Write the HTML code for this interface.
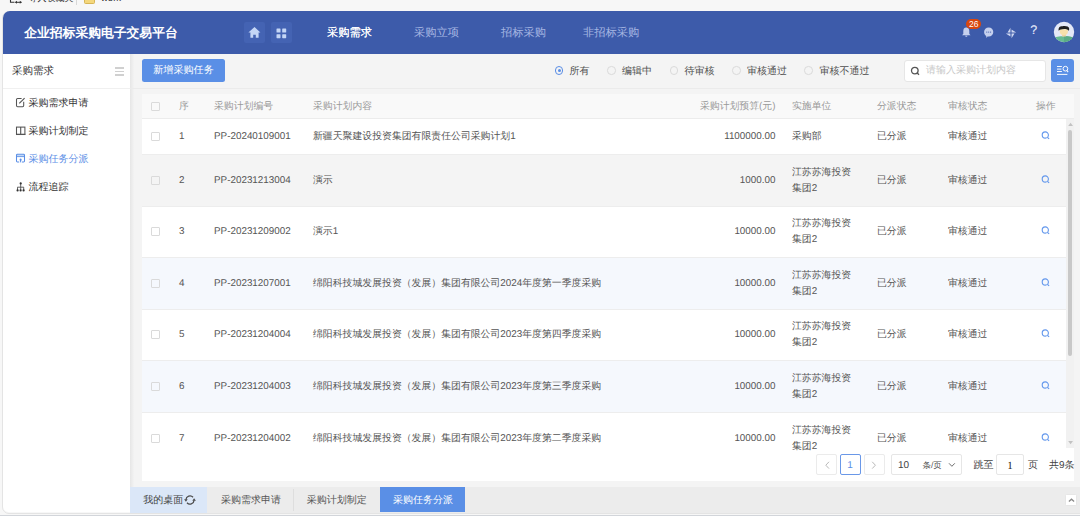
<!DOCTYPE html>
<html><head><meta charset="utf-8">
<style>
*{box-sizing:border-box;margin:0;padding:0}
html,body{width:1080px;height:516px;overflow:hidden;background:#f7f7f7;font-family:"Liberation Sans",sans-serif;text-rendering:geometricPrecision}
.a{position:absolute;white-space:nowrap}
#hdr{position:absolute;left:3px;top:11px;width:1077px;height:42.6px;background:#3d5baa;border-top-left-radius:7px}
#side{position:absolute;left:3px;top:53.6px;width:127px;height:458.9px;background:#fff;border-bottom-left-radius:6px}
#main{position:absolute;left:130px;top:53.6px;width:950px;height:458.9px;background:#f4f4f4}
#bottomline{position:absolute;left:0;top:515px;width:1080px;height:1px;background:#d2d5da}
#frame{position:absolute;left:2px;top:10.5px;width:1090px;height:503px;border:1px solid #e4e4e4;border-radius:7px}
</style></head><body>

<!-- bookmark bar remnants -->
<div class="a" style="left:28.5px;top:-7.2px;font-size:9px;line-height:10px;color:#333">导入收藏夹</div>
<div class="a" style="left:101px;top:-5.6px;font-size:9.5px;line-height:10px;color:#333">work</div>
<svg class="a" style="left:9px;top:-6px" width="14" height="10" viewBox="0 0 14 10"><path d="M1.5 0 L1.5 8.3 L5.5 8.3" fill="none" stroke="#333" stroke-width="1.1"/><path d="M6.3 8.3 L12.5 8.3" stroke="#333" stroke-width="1"/><path d="M6 8.3 L8 6.8 L8 9.8Z M12.8 8.3 L10.8 6.8 L10.8 9.8Z" fill="#333"/></svg>
<div class="a" style="left:76px;top:0;width:1px;height:4.5px;background:#d8d8d8"></div>
<div class="a" style="left:84.3px;top:-5px;width:10.3px;height:8.5px;background:#f4d77c;border:1px solid #d7b556;border-radius:1.5px"></div>
<div id="frame"></div>
<div id="hdr"></div>
<div class="a" style="left:24.2px;top:25.2px;font-size:12.8px;line-height:16px;color:#fff;font-weight:bold">企业招标采购电子交易平台</div>

<div id="side"></div>
<div id="main"></div>

<!-- header nav buttons -->
<div class="a" style="left:244px;top:22px;width:21px;height:21px;background:#4463b3;border-radius:2px"></div>
<div class="a" style="left:271px;top:22px;width:21px;height:21px;background:#4463b3;border-radius:2px"></div>
<svg class="a" style="left:248px;top:26px" width="13" height="13" viewBox="0 0 13 13"><path d="M6.5 0.9 L12.4 6.5 L10.6 6.5 L10.6 11.8 L7.8 11.8 L7.8 8.7 L5.2 8.7 L5.2 11.8 L2.4 11.8 L2.4 6.5 L0.4 6.5 Z" fill="#c4d6f6"/></svg>
<svg class="a" style="left:276px;top:27.5px" width="11" height="11" viewBox="0 0 11 11"><rect x="0.5" y="0.5" width="4" height="4" rx="0.6" fill="#c4d6f6"/><rect x="6.2" y="0.5" width="4" height="4" rx="0.6" fill="#c4d6f6"/><rect x="0.5" y="6.2" width="4" height="4" rx="0.6" fill="#c4d6f6"/><rect x="6.2" y="6.2" width="4" height="4" rx="0.6" fill="#c4d6f6"/></svg>
<div class="a" style="left:327px;top:26px;font-size:11.25px;line-height:14px;color:#fff;text-shadow:0 0 0.4px #fff">采购需求</div>
<div class="a" style="left:414px;top:26px;font-size:11.25px;line-height:14px;color:#a6b6e2">采购立项</div>
<div class="a" style="left:501px;top:26px;font-size:11.25px;line-height:14px;color:#a6b6e2">招标采购</div>
<div class="a" style="left:583px;top:26px;font-size:11.25px;line-height:14px;color:#a6b6e2">非招标采购</div>

<!-- right icons -->
<svg class="a" style="left:961px;top:26px" width="12" height="12" viewBox="0 0 12 12"><path d="M5.3 1.6 C3.1 1.6 2.3 3.3 2.3 5.3 L2.3 7.8 L1.1 9.2 L9.5 9.2 L8.3 7.8 L8.3 5.3 C8.3 3.3 7.5 1.6 5.3 1.6Z M4.2 9.7 L6.4 9.7 C6.4 10.4 5.9 10.7 5.3 10.7 C4.7 10.7 4.2 10.4 4.2 9.7Z" fill="#c5d0ee"/></svg>
<div class="a" style="left:966px;top:19.3px;width:15.3px;height:9.6px;background:#d9470f;border-radius:5px;color:#fff;font-size:8.5px;line-height:11px;text-align:center">26</div>
<svg class="a" style="left:983px;top:27px" width="12" height="12" viewBox="0 0 12 12"><path d="M5.7 0.6 C8.3 0.6 10.3 2.6 10.3 5.1 C10.3 7.6 8.3 9.6 5.7 9.6 C5.3 9.6 4.9 9.55 4.5 9.45 L3.5 10.9 L3.2 9 C1.9 8.2 1.1 6.8 1.1 5.1 C1.1 2.6 3.1 0.6 5.7 0.6Z" fill="#c5d0ee"/><circle cx="3.8" cy="5.1" r="0.6" fill="#4862ad"/><circle cx="5.7" cy="5.1" r="0.6" fill="#4862ad"/><circle cx="7.6" cy="5.1" r="0.6" fill="#4862ad"/></svg>
<svg class="a" style="left:1004.4px;top:25.7px" width="14" height="14" viewBox="0 0 14 14"><path d="M6.45 6.45 L6.45 1.80 L3.50 6.45Z M7.55 6.45 L12.20 6.45 L7.55 3.50Z M7.55 7.55 L7.55 12.20 L10.50 7.55Z M6.45 7.55 L1.80 7.55 L6.45 10.50Z" fill="#cdd6f0"/></svg>
<div class="a" style="left:1030.3px;top:23px;font-size:12.5px;line-height:14px;color:#d2d9f0;text-shadow:0 0 0.5px #d2d9f0">?</div>
<svg class="a" style="left:1053px;top:21.4px" width="22" height="22" viewBox="0 0 22 22"><defs><clipPath id="cc"><circle cx="11" cy="11" r="10.2"/></clipPath></defs><circle cx="11" cy="11" r="10.2" fill="#e4e9f7"/><g clip-path="url(#cc)"><path d="M0 22 L0 17.2 C2.5 15.6 6 15.2 11 15.2 C16 15.2 19.5 15.6 22 17.2 L22 22Z" fill="#68bb93"/><path d="M11 15.2 C16 15.2 19.5 15.6 22 17.2 L22 22 L11 22Z" fill="#5aab86"/><rect x="9.2" y="12.6" width="3.6" height="2.9" fill="#ecd09c"/><path d="M6.7 8.3 L15 8.3 L14.8 11.3 C14.5 13.6 13 14.3 10.9 14.3 C8.8 14.3 7.2 13.6 6.9 11.3Z" fill="#f6e0ab"/><path d="M5.7 9.8 C5.1 6.6 6.9 5.2 9.4 5.3 C11 4.7 13 4.8 14.6 5.5 C16.3 6.3 16.5 8 15.9 9.8 C15.1 8.7 14.3 8.3 13.4 8.2 C11 8.0 8.6 8.2 6.9 8.7 C6.4 9 6 9.3 5.7 9.8Z" fill="#1f1f1f"/></g></svg>

<!-- sidebar -->
<div class="a" style="left:12px;top:64.5px;font-size:10.5px;line-height:13px;color:#333">采购需求</div>
<div class="a" style="left:115px;top:67px;width:9px;height:1.6px;background:#d0d0d0"></div>
<div class="a" style="left:115px;top:70.6px;width:9px;height:1.6px;background:#d0d0d0"></div>
<div class="a" style="left:115px;top:74.2px;width:9px;height:1.6px;background:#d0d0d0"></div>
<div class="a" style="left:3px;top:88px;width:127px;height:1px;background:#f0f0f0"></div>
<svg class="a" style="left:12px;top:94px" width="18" height="16" viewBox="0 0 18 16"><path d="M9.6 4.5 L5.6 4.5 Q4.5 4.5 4.5 5.6 L4.5 11.6 Q4.5 12.7 5.6 12.7 L10.6 12.7 Q11.7 12.7 11.7 11.6 L11.7 7.8" fill="none" stroke="#555" stroke-width="1.05"/><path d="M7.3 9.4 L12.6 4.1" stroke="#555" stroke-width="1.15"/></svg>
<div class="a" style="left:28.5px;top:96.7px;font-size:10px;line-height:13px;color:#333">采购需求申请</div>
<svg class="a" style="left:12px;top:122px" width="18" height="16" viewBox="0 0 18 16"><rect x="4.5" y="5.1" width="8.4" height="7.4" fill="none" stroke="#555" stroke-width="1.05"/><path d="M8.7 5.1 L8.7 12.5 M4 12.3 L13.4 12.3" stroke="#555" stroke-width="1.1"/></svg>
<div class="a" style="left:28.5px;top:125.2px;font-size:10px;line-height:13px;color:#333">采购计划制定</div>
<svg class="a" style="left:12px;top:150px" width="18" height="16" viewBox="0 0 18 16"><path d="M7.2 11.9 L5.4 11.9 Q4.5 11.9 4.5 11 L4.5 5.2 Q4.5 4.3 5.4 4.3 L11.6 4.3 Q12.5 4.3 12.5 5.2 L12.5 11 Q12.5 11.9 11.6 11.9 L9.8 11.9" fill="none" stroke="#5a8ee6" stroke-width="1.05"/><path d="M4.5 6.6 L12.5 6.6" stroke="#5a8ee6" stroke-width="0.9"/><rect x="5" y="4.8" width="7" height="1.4" fill="#5a8ee6" opacity="0.35"/><path d="M8.6 8.6 C9.6 8.6 9.9 9.6 9.4 10.5 L8.3 13 L7.9 10.5 C7.4 9.6 7.6 8.6 8.6 8.6Z" fill="#5a8ee6"/></svg>
<div class="a" style="left:28.5px;top:153.2px;font-size:10px;line-height:13px;color:#5a8ee6">采购任务分派</div>
<svg class="a" style="left:12px;top:178px" width="18" height="16" viewBox="0 0 18 16"><path d="M8.7 5.3 L8.7 12.3 M5.4 9.2 L11.8 9.2 M5.5 9.2 L5.5 12.3 M11.7 9.2 L11.7 12.3" fill="none" stroke="#555" stroke-width="0.9"/><circle cx="8.7" cy="5.4" r="1.1" fill="#333"/><circle cx="5.6" cy="12.4" r="1.1" fill="#333"/><circle cx="8.6" cy="12.4" r="1.1" fill="#333"/><circle cx="11.6" cy="12.4" r="1.1" fill="#333"/></svg>
<div class="a" style="left:28.5px;top:181.2px;font-size:10px;line-height:13px;color:#333">流程追踪</div>

<!-- toolbar -->
<div class="a" style="left:130px;top:53.6px;width:4px;height:433.4px;background:linear-gradient(to right,#e6e6e6,#f3f3f3)"></div>
<div class="a" style="left:130px;top:87.5px;width:950px;height:1px;background:#ebebeb"></div>
<div class="a" style="left:142px;top:59.2px;width:83px;height:22.6px;background:#5a8fe6;border-radius:2.5px;color:#fff;font-size:10.1px;line-height:24px;text-align:center">新增采购任务</div>

<!-- radios -->
<div class="a" style="left:554.7px;top:66px;width:8.6px;height:8.6px;border:1px solid #5a8ee6;border-radius:50%"></div>
<div class="a" style="left:557.5px;top:68.8px;width:3px;height:3px;background:#5a8ee6;border-radius:50%"></div>
<div class="a" style="left:569.5px;top:64.7px;font-size:10px;line-height:13px;color:#505050">所有</div>
<div class="a" style="left:607px;top:66px;width:8.6px;height:8.6px;border:1px solid #dadada;border-radius:50%"></div>
<div class="a" style="left:622px;top:64.7px;font-size:10px;line-height:13px;color:#505050">编辑中</div>
<div class="a" style="left:669.7px;top:66px;width:8.6px;height:8.6px;border:1px solid #dadada;border-radius:50%"></div>
<div class="a" style="left:684.5px;top:64.7px;font-size:10px;line-height:13px;color:#505050">待审核</div>
<div class="a" style="left:732px;top:66px;width:8.6px;height:8.6px;border:1px solid #dadada;border-radius:50%"></div>
<div class="a" style="left:747px;top:64.7px;font-size:10px;line-height:13px;color:#505050">审核通过</div>
<div class="a" style="left:804.2px;top:66px;width:8.6px;height:8.6px;border:1px solid #dadada;border-radius:50%"></div>
<div class="a" style="left:819.5px;top:64.7px;font-size:10px;line-height:13px;color:#505050">审核不通过</div>

<!-- search -->
<div class="a" style="left:904px;top:59.5px;width:141.5px;height:22px;background:#fff;border:1px solid #e6e6e6;border-radius:3px"></div>
<svg class="a" style="left:910px;top:66px" width="11" height="10" viewBox="0 0 11 10"><circle cx="4.8" cy="4.6" r="3.3" fill="none" stroke="#555" stroke-width="1.3"/><path d="M7.2 7 L9 8.8" stroke="#555" stroke-width="1.3"/></svg>
<div class="a" style="left:926px;top:64px;font-size:10px;line-height:13px;color:#c8c8c8">请输入采购计划内容</div>
<div class="a" style="left:1051px;top:59.2px;width:23px;height:22.8px;background:#5a8fe6;border-radius:3px"></div>
<svg class="a" style="left:1051px;top:57px" width="23" height="28" viewBox="0 0 23 28"><path d="M6 9.5 L10.9 9.5 M6 12.1 L10.4 12.1 M6 14.5 L10.9 14.5 M6 17.4 L16.4 17.4" stroke="#fff" stroke-width="0.95"/><circle cx="14.4" cy="11.7" r="2.35" fill="none" stroke="#fff" stroke-width="1"/><path d="M16 13.5 L17.1 15.1" stroke="#fff" stroke-width="1.1"/></svg>

<!-- table -->
<div class="a" style="left:142px;top:94px;width:932px;height:387px;background:#fff"></div>
<div class="a" style="left:142px;top:94px;width:932px;height:24.5px;background:#f9f9f9;border-bottom:1px solid #ececec"></div>
<div class="a" style="left:142px;top:154.5px;width:924.2px;height:51.5px;background:#f4f4f4"></div>
<div class="a" style="left:142px;top:257px;width:924.2px;height:52px;background:#f5f8fd"></div>
<div class="a" style="left:142px;top:360px;width:924.2px;height:52px;background:#f5f8fd"></div>
<div class="a" style="left:142px;top:153.5px;width:924.2px;height:1px;background:#ededed"></div><div class="a" style="left:142px;top:205.5px;width:924.2px;height:1px;background:#ededed"></div><div class="a" style="left:142px;top:256.5px;width:924.2px;height:1px;background:#ededed"></div><div class="a" style="left:142px;top:308.5px;width:924.2px;height:1px;background:#ededed"></div><div class="a" style="left:142px;top:359.5px;width:924.2px;height:1px;background:#ededed"></div><div class="a" style="left:142px;top:411.5px;width:924.2px;height:1px;background:#ededed"></div>
<div class="a" style="left:0;top:0;width:1080px;height:451px;overflow:hidden"><div class="a" style="left:151px;top:101.8px;width:9px;height:9.4px;border:1px solid #dadada;border-radius:1px"></div>
<div class="a" style="left:179px;top:99.8px;font-size:9.87px;line-height:13px;color:#999">序</div>
<div class="a" style="left:214px;top:99.8px;font-size:9.87px;line-height:13px;color:#999">采购计划编号</div>
<div class="a" style="left:313px;top:99.8px;font-size:9.87px;line-height:13px;color:#999">采购计划内容</div>
<div class="a" style="left:877px;top:99.8px;font-size:9.87px;line-height:13px;color:#999">分派状态</div>
<div class="a" style="left:948px;top:99.8px;font-size:9.87px;line-height:13px;color:#999">审核状态</div>
<div class="a" style="left:1036px;top:99.8px;font-size:9.87px;line-height:13px;color:#999">操作</div>
<div class="a" style="left:792px;top:99.8px;font-size:9.87px;line-height:13px;color:#999">实施单位</div>
<div class="a" style="left:675px;width:100.5px;text-align:right;top:99.8px;font-size:9.87px;line-height:13px;color:#999">采购计划预算(元)</div>
<div class="a" style="left:151px;top:131.75px;width:9px;height:9.4px;border:1px solid #dadada;border-radius:1px"></div>
<div class="a" style="left:179px;top:129.75px;font-size:9.87px;line-height:13px;color:#555">1</div>
<div class="a" style="left:214px;top:129.75px;font-size:9.87px;line-height:13px;color:#555">PP-20240109001</div>
<div class="a" style="left:313px;top:129.75px;font-size:9.87px;line-height:13px;color:#555">新疆天聚建设投资集团有限责任公司采购计划1</div>
<div class="a" style="left:675px;width:100.5px;text-align:right;top:129.75px;font-size:9.87px;line-height:13px;color:#555">1100000.00</div>
<div class="a" style="left:792px;top:129.75px;font-size:9.87px;line-height:13px;color:#555">采购部</div>
<div class="a" style="left:877px;top:129.75px;font-size:9.87px;line-height:13px;color:#555">已分派</div>
<div class="a" style="left:948px;top:129.75px;font-size:9.87px;line-height:13px;color:#555">审核通过</div>
<svg class="a" style="left:1040.5px;top:130.95px" width="10" height="9" viewBox="0 0 10 9"><circle cx="4.3" cy="4" r="3.1" fill="none" stroke="#6297ec" stroke-width="1.1"/><path d="M6.5 6.3 L8.1 7.9" stroke="#6297ec" stroke-width="1.2"/></svg>
<div class="a" style="left:151px;top:175.5px;width:9px;height:9.4px;border:1px solid #dadada;border-radius:1px"></div>
<div class="a" style="left:179px;top:173.5px;font-size:9.87px;line-height:13px;color:#555">2</div>
<div class="a" style="left:214px;top:173.5px;font-size:9.87px;line-height:13px;color:#555">PP-20231213004</div>
<div class="a" style="left:313px;top:173.5px;font-size:9.87px;line-height:13px;color:#555">演示</div>
<div class="a" style="left:675px;width:100.5px;text-align:right;top:173.5px;font-size:9.87px;line-height:13px;color:#555">1000.00</div>
<div class="a" style="left:792px;top:164.80px;font-size:9.87px;line-height:16px;color:#555">江苏苏海投资<br>集团2</div>
<div class="a" style="left:877px;top:173.5px;font-size:9.87px;line-height:13px;color:#555">已分派</div>
<div class="a" style="left:948px;top:173.5px;font-size:9.87px;line-height:13px;color:#555">审核通过</div>
<svg class="a" style="left:1040.5px;top:174.70px" width="10" height="9" viewBox="0 0 10 9"><circle cx="4.3" cy="4" r="3.1" fill="none" stroke="#6297ec" stroke-width="1.1"/><path d="M6.5 6.3 L8.1 7.9" stroke="#6297ec" stroke-width="1.2"/></svg>
<div class="a" style="left:151px;top:227.0px;width:9px;height:9.4px;border:1px solid #dadada;border-radius:1px"></div>
<div class="a" style="left:179px;top:225.0px;font-size:9.87px;line-height:13px;color:#555">3</div>
<div class="a" style="left:214px;top:225.0px;font-size:9.87px;line-height:13px;color:#555">PP-20231209002</div>
<div class="a" style="left:313px;top:225.0px;font-size:9.87px;line-height:13px;color:#555">演示1</div>
<div class="a" style="left:675px;width:100.5px;text-align:right;top:225.0px;font-size:9.87px;line-height:13px;color:#555">10000.00</div>
<div class="a" style="left:792px;top:216.30px;font-size:9.87px;line-height:16px;color:#555">江苏苏海投资<br>集团2</div>
<div class="a" style="left:877px;top:225.0px;font-size:9.87px;line-height:13px;color:#555">已分派</div>
<div class="a" style="left:948px;top:225.0px;font-size:9.87px;line-height:13px;color:#555">审核通过</div>
<svg class="a" style="left:1040.5px;top:226.20px" width="10" height="9" viewBox="0 0 10 9"><circle cx="4.3" cy="4" r="3.1" fill="none" stroke="#6297ec" stroke-width="1.1"/><path d="M6.5 6.3 L8.1 7.9" stroke="#6297ec" stroke-width="1.2"/></svg>
<div class="a" style="left:151px;top:278.5px;width:9px;height:9.4px;border:1px solid #dadada;border-radius:1px"></div>
<div class="a" style="left:179px;top:276.5px;font-size:9.87px;line-height:13px;color:#555">4</div>
<div class="a" style="left:214px;top:276.5px;font-size:9.87px;line-height:13px;color:#555">PP-20231207001</div>
<div class="a" style="left:313px;top:276.5px;font-size:9.87px;line-height:13px;color:#555">绵阳科技城发展投资（发展）集团有限公司2024年度第一季度采购</div>
<div class="a" style="left:675px;width:100.5px;text-align:right;top:276.5px;font-size:9.87px;line-height:13px;color:#555">10000.00</div>
<div class="a" style="left:792px;top:267.80px;font-size:9.87px;line-height:16px;color:#555">江苏苏海投资<br>集团2</div>
<div class="a" style="left:877px;top:276.5px;font-size:9.87px;line-height:13px;color:#555">已分派</div>
<div class="a" style="left:948px;top:276.5px;font-size:9.87px;line-height:13px;color:#555">审核通过</div>
<svg class="a" style="left:1040.5px;top:277.70px" width="10" height="9" viewBox="0 0 10 9"><circle cx="4.3" cy="4" r="3.1" fill="none" stroke="#6297ec" stroke-width="1.1"/><path d="M6.5 6.3 L8.1 7.9" stroke="#6297ec" stroke-width="1.2"/></svg>
<div class="a" style="left:151px;top:330.0px;width:9px;height:9.4px;border:1px solid #dadada;border-radius:1px"></div>
<div class="a" style="left:179px;top:328.0px;font-size:9.87px;line-height:13px;color:#555">5</div>
<div class="a" style="left:214px;top:328.0px;font-size:9.87px;line-height:13px;color:#555">PP-20231204004</div>
<div class="a" style="left:313px;top:328.0px;font-size:9.87px;line-height:13px;color:#555">绵阳科技城发展投资（发展）集团有限公司2023年度第四季度采购</div>
<div class="a" style="left:675px;width:100.5px;text-align:right;top:328.0px;font-size:9.87px;line-height:13px;color:#555">10000.00</div>
<div class="a" style="left:792px;top:319.30px;font-size:9.87px;line-height:16px;color:#555">江苏苏海投资<br>集团2</div>
<div class="a" style="left:877px;top:328.0px;font-size:9.87px;line-height:13px;color:#555">已分派</div>
<div class="a" style="left:948px;top:328.0px;font-size:9.87px;line-height:13px;color:#555">审核通过</div>
<svg class="a" style="left:1040.5px;top:329.20px" width="10" height="9" viewBox="0 0 10 9"><circle cx="4.3" cy="4" r="3.1" fill="none" stroke="#6297ec" stroke-width="1.1"/><path d="M6.5 6.3 L8.1 7.9" stroke="#6297ec" stroke-width="1.2"/></svg>
<div class="a" style="left:151px;top:381.5px;width:9px;height:9.4px;border:1px solid #dadada;border-radius:1px"></div>
<div class="a" style="left:179px;top:379.5px;font-size:9.87px;line-height:13px;color:#555">6</div>
<div class="a" style="left:214px;top:379.5px;font-size:9.87px;line-height:13px;color:#555">PP-20231204003</div>
<div class="a" style="left:313px;top:379.5px;font-size:9.87px;line-height:13px;color:#555">绵阳科技城发展投资（发展）集团有限公司2023年度第三季度采购</div>
<div class="a" style="left:675px;width:100.5px;text-align:right;top:379.5px;font-size:9.87px;line-height:13px;color:#555">10000.00</div>
<div class="a" style="left:792px;top:370.80px;font-size:9.87px;line-height:16px;color:#555">江苏苏海投资<br>集团2</div>
<div class="a" style="left:877px;top:379.5px;font-size:9.87px;line-height:13px;color:#555">已分派</div>
<div class="a" style="left:948px;top:379.5px;font-size:9.87px;line-height:13px;color:#555">审核通过</div>
<svg class="a" style="left:1040.5px;top:380.70px" width="10" height="9" viewBox="0 0 10 9"><circle cx="4.3" cy="4" r="3.1" fill="none" stroke="#6297ec" stroke-width="1.1"/><path d="M6.5 6.3 L8.1 7.9" stroke="#6297ec" stroke-width="1.2"/></svg>
<div class="a" style="left:151px;top:433.5px;width:9px;height:9.4px;border:1px solid #dadada;border-radius:1px"></div>
<div class="a" style="left:179px;top:431.5px;font-size:9.87px;line-height:13px;color:#555">7</div>
<div class="a" style="left:214px;top:431.5px;font-size:9.87px;line-height:13px;color:#555">PP-20231204002</div>
<div class="a" style="left:313px;top:431.5px;font-size:9.87px;line-height:13px;color:#555">绵阳科技城发展投资（发展）集团有限公司2023年度第二季度采购</div>
<div class="a" style="left:675px;width:100.5px;text-align:right;top:431.5px;font-size:9.87px;line-height:13px;color:#555">10000.00</div>
<div class="a" style="left:792px;top:422.80px;font-size:9.87px;line-height:16px;color:#555">江苏苏海投资<br>集团2</div>
<div class="a" style="left:877px;top:431.5px;font-size:9.87px;line-height:13px;color:#555">已分派</div>
<div class="a" style="left:948px;top:431.5px;font-size:9.87px;line-height:13px;color:#555">审核通过</div>
<svg class="a" style="left:1040.5px;top:432.70px" width="10" height="9" viewBox="0 0 10 9"><circle cx="4.3" cy="4" r="3.1" fill="none" stroke="#6297ec" stroke-width="1.1"/><path d="M6.5 6.3 L8.1 7.9" stroke="#6297ec" stroke-width="1.2"/></svg></div>
<div class="a" style="left:1066.2px;top:118.5px;width:7.6px;height:329.5px;background:#f1f1f1"></div>
<div class="a" style="left:1067.9px;top:129.8px;width:4.2px;height:226px;background:#c8c8c8;border-radius:2px"></div>
<svg class="a" style="left:1067px;top:121px" width="7" height="6" viewBox="0 0 7 6"><path d="M1.2 5 L3.6 1.8 L6 5Z" fill="#c2c2c2"/></svg>
<svg class="a" style="left:1067px;top:440px" width="7" height="6" viewBox="0 0 7 6"><path d="M1.2 1 L3.6 4.2 L6 1Z" fill="#c2c2c2"/></svg>


<!-- pagination -->
<div class="a" style="left:816px;top:454.2px;width:20.8px;height:20.9px;border:1px solid #ebebeb;border-radius:2px;background:#fff"></div>
<svg class="a" style="left:822.5px;top:460.5px" width="8" height="8" viewBox="0 0 8 8"><path d="M6 0.8 L2.8 4.2 L6 7.6" fill="none" stroke="#b8b8b8" stroke-width="1"/></svg>
<div class="a" style="left:839.5px;top:454.2px;width:21px;height:20.9px;border:1px solid #6a98e8;border-radius:2px;background:#fff;color:#5a8ee6;font-size:10px;line-height:21.6px;text-align:center">1</div>
<div class="a" style="left:863.5px;top:454.2px;width:21px;height:20.9px;border:1px solid #ebebeb;border-radius:2px;background:#fff"></div>
<svg class="a" style="left:870px;top:460.5px" width="8" height="8" viewBox="0 0 8 8"><path d="M2.2 0.8 L5.4 4.2 L2.2 7.6" fill="none" stroke="#b8b8b8" stroke-width="1"/></svg>
<div class="a" style="left:891px;top:454.2px;width:71px;height:20.9px;border:1px solid #e6e6e6;border-radius:2px;background:#fff"></div>
<div class="a" style="left:898px;top:458.5px;font-size:10px;line-height:13px;color:#444">10</div>
<div class="a" style="left:922.5px;top:459px;font-size:8.5px;line-height:13px;color:#555">条/页</div>
<svg class="a" style="left:948px;top:462px" width="8" height="6" viewBox="0 0 8 6"><path d="M1 1.3 L3.9 4.3 L6.8 1.3" fill="none" stroke="#666" stroke-width="0.95"/></svg>
<div class="a" style="left:973.5px;top:458.5px;font-size:10px;line-height:13px;color:#444">跳至</div>
<div class="a" style="left:996px;top:454.3px;width:28.3px;height:20.5px;border:1px solid #e6e6e6;border-radius:2px;background:#fff"></div>
<div class="a" style="left:1007.3px;top:460.2px;font-family:'Liberation Serif',serif;font-size:11px;line-height:13px;color:#222">1</div>
<div class="a" style="left:1028px;top:458.5px;font-size:10px;line-height:13px;color:#444">页</div>
<div class="a" style="left:1049px;top:458.5px;font-size:10px;line-height:13px;color:#444">共9条</div>

<!-- bottom tabs -->
<div class="a" style="left:130px;top:487px;width:950px;height:25.5px;background:#ececec"></div>
<div class="a" style="left:130px;top:487px;width:77.3px;height:25.5px;background:#dbe7f8"></div>
<div class="a" style="left:143.3px;top:493.5px;font-size:10px;line-height:13px;color:#444">我的桌面</div>
<svg class="a" style="left:184.3px;top:493.5px" width="12" height="12" viewBox="0 0 12 12"><path d="M1.92 5.64 A4.1 4.1 0 0 1 9.05 3.26" fill="none" stroke="#4a4a4a" stroke-width="1.2"/><path d="M10.08 6.36 A4.1 4.1 0 0 1 2.95 8.74" fill="none" stroke="#4a4a4a" stroke-width="1.2"/><path d="M0.1 5.3 L3.7 5.3 L1.9 7.8Z" fill="#4a4a4a"/><path d="M8.3 6.7 L11.9 6.7 L10.1 4.2Z" fill="#4a4a4a"/></svg>
<div class="a" style="left:293px;top:489px;width:1px;height:22px;background:#dedede"></div>
<div class="a" style="left:221px;top:493.5px;font-size:10px;line-height:13px;color:#555">采购需求申请</div>
<div class="a" style="left:306.7px;top:493.5px;font-size:10px;line-height:13px;color:#555">采购计划制定</div>
<div class="a" style="left:380px;top:487.2px;width:85.2px;height:25.3px;background:#5a8fe6"></div>
<div class="a" style="left:393px;top:493.5px;font-size:10px;line-height:13px;color:#fff">采购任务分派</div>
<div class="a" style="left:1064.7px;top:493.6px;width:12.6px;height:12.6px;background:#fff;border:1px solid #e6e6e6;border-radius:1.5px"></div>
<svg class="a" style="left:1066.5px;top:495.5px" width="9" height="9" viewBox="0 0 9 9"><path d="M1.9 5.6 L4.5 3.2 L7.1 5.6" fill="none" stroke="#8a8a8a" stroke-width="1.3"/></svg>
<div id="bottomline"></div>
</body></html>
